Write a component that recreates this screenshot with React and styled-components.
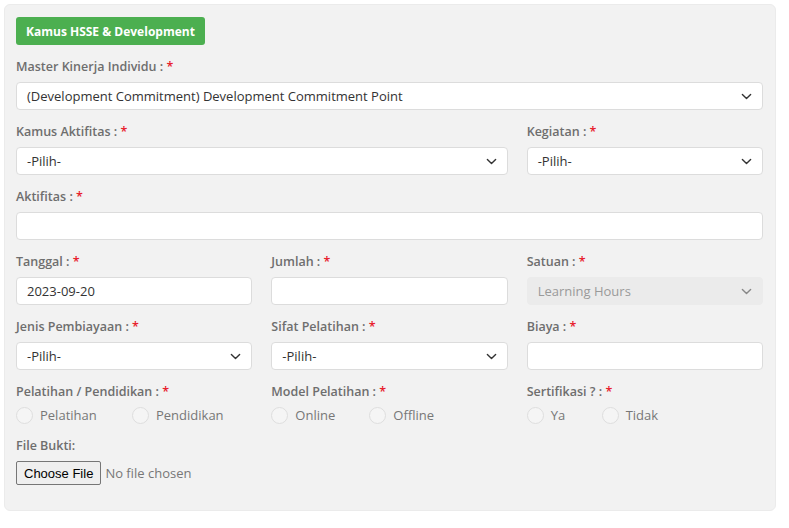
import React from 'react';
import styled, { createGlobalStyle } from 'styled-components';

const GlobalStyle = createGlobalStyle`
  body {
    margin: 0;
    background: #ffffff;
    font-family: "Open Sans", "Liberation Sans", sans-serif;
  }
`;

const Panel = styled.div`
  margin: 4px 0 0 4px;
  width: 772px;
  box-sizing: border-box;
  background-color: #f2f2f2;
  border: 1px solid #ebebeb;
  border-radius: 6px;
  padding: 12px 12px 25px 11px;
`;

const TitleButton = styled.div`
  display: inline-flex;
  align-items: center;
  height: 28px;
  padding: 0 10px;
  background-color: #4caf50;
  color: #ffffff;
  border-radius: 3px;
  font-size: 12px;
  font-weight: 700;
  margin-bottom: 12px;
`;

const Grid = styled.div`
  display: grid;
  grid-template-columns: repeat(3, 1fr);
  column-gap: 19px;
  width: 747px;
`;

const Field = styled.div`
  grid-column: span ${({ $span }) => $span || 1};
  margin-bottom: ${({ $mb }) => ($mb != null ? $mb : 12)}px;
`;

const Label = styled.div`
  height: 20px;
  line-height: 20px;
  font-size: 12.5px;
  font-weight: 600;
  color: #6e6e6e;
  margin-bottom: ${({ $gap }) => ($gap != null ? $gap : 5)}px;
  white-space: nowrap;

  span {
    color: #e8202c;
  }
`;

const Control = styled.div`
  height: 28px;
  box-sizing: border-box;
  display: flex;
  align-items: center;
  justify-content: space-between;
  padding: 0 10px;
  background-color: ${({ $disabled }) => ($disabled ? '#ebebeb' : '#ffffff')};
  border: 1px solid ${({ $disabled }) => ($disabled ? '#ebebeb' : '#dcdcdc')};
  border-radius: 4px;
  font-size: 13px;
  color: ${({ $disabled }) => ($disabled ? '#9a9a9a' : '#333333')};
  white-space: nowrap;
`;

const Chevron = ({ color = '#333' }) => (
  <svg width="11" height="11" viewBox="0 0 16 16">
    <path d="M2 5l6 6 6-6" fill="none" stroke={color} strokeWidth="2" strokeLinecap="round" strokeLinejoin="round" />
  </svg>
);

const RadioRow = styled.div`
  display: flex;
  align-items: center;
  height: 20px;
`;

const RadioItem = styled.label`
  display: flex;
  align-items: center;
  width: ${({ $w }) => $w}px;
  font-size: 13px;
  color: #777777;
`;

const Circle = styled.span`
  width: 17px;
  height: 17px;
  box-sizing: border-box;
  border-radius: 50%;
  border: 1px solid #dedede;
  background-color: #f5f5f5;
  margin-right: 7px;
`;

const FileRow = styled.div`
  display: flex;
  align-items: center;
  gap: 4px;
`;

const FileButton = styled.div`
  height: 24px;
  box-sizing: border-box;
  padding: 0 7px;
  display: flex;
  align-items: center;
  border: 1px solid #767676;
  border-radius: 2px;
  background-color: #efefef;
  font-family: "Liberation Sans", Arial, sans-serif;
  font-size: 13px;
  color: #000;
`;

const FileText = styled.span`
  font-size: 13px;
  color: #777777;
`;

const Req = () => <span>*</span>;

const Select = ({ value, disabled }) => (
  <Control $disabled={disabled}>
    {value}
    <Chevron color={disabled ? '#888' : '#333'} />
  </Control>
);

const Radios = ({ items }) => (
  <RadioRow>
    {items.map(([t, w]) => (
      <RadioItem key={t} $w={w}>
        <Circle />
        {t}
      </RadioItem>
    ))}
  </RadioRow>
);

export default function App() {
  return (
    <>
      <GlobalStyle />
      <Panel>
        <TitleButton>Kamus HSSE &amp; Development</TitleButton>
        <Grid>
          <Field $span={3}>
            <Label>Master Kinerja Individu : <Req /></Label>
            <Select value="(Development Commitment) Development Commitment Point" />
          </Field>
          <Field $span={2}>
            <Label>Kamus Aktifitas : <Req /></Label>
            <Select value="-Pilih-" />
          </Field>
          <Field>
            <Label>Kegiatan : <Req /></Label>
            <Select value="-Pilih-" />
          </Field>
          <Field $span={3}>
            <Label>Aktifitas : <Req /></Label>
            <Control />
          </Field>
          <Field>
            <Label>Tanggal : <Req /></Label>
            <Control>2023-09-20</Control>
          </Field>
          <Field>
            <Label>Jumlah : <Req /></Label>
            <Control />
          </Field>
          <Field>
            <Label>Satuan : <Req /></Label>
            <Select value="Learning Hours" disabled />
          </Field>
          <Field>
            <Label>Jenis Pembiayaan : <Req /></Label>
            <Select value="-Pilih-" />
          </Field>
          <Field>
            <Label>Sifat Pelatihan : <Req /></Label>
            <Select value="-Pilih-" />
          </Field>
          <Field>
            <Label>Biaya : <Req /></Label>
            <Control />
          </Field>
          <Field $mb={11}>
            <Label $gap={3}>Pelatihan / Pendidikan : <Req /></Label>
            <Radios items={[['Pelatihan', 116], ['Pendidikan', 100]]} />
          </Field>
          <Field $mb={11}>
            <Label $gap={3}>Model Pelatihan : <Req /></Label>
            <Radios items={[['Online', 98], ['Offline', 100]]} />
          </Field>
          <Field $mb={11}>
            <Label $gap={3}>Sertifikasi ? : <Req /></Label>
            <Radios items={[['Ya', 75], ['Tidak', 100]]} />
          </Field>
          <Field $span={3} $mb={0}>
            <Label>File Bukti:</Label>
            <FileRow>
              <FileButton>Choose File</FileButton>
              <FileText>No file chosen</FileText>
            </FileRow>
          </Field>
        </Grid>
      </Panel>
    </>
  );
}
